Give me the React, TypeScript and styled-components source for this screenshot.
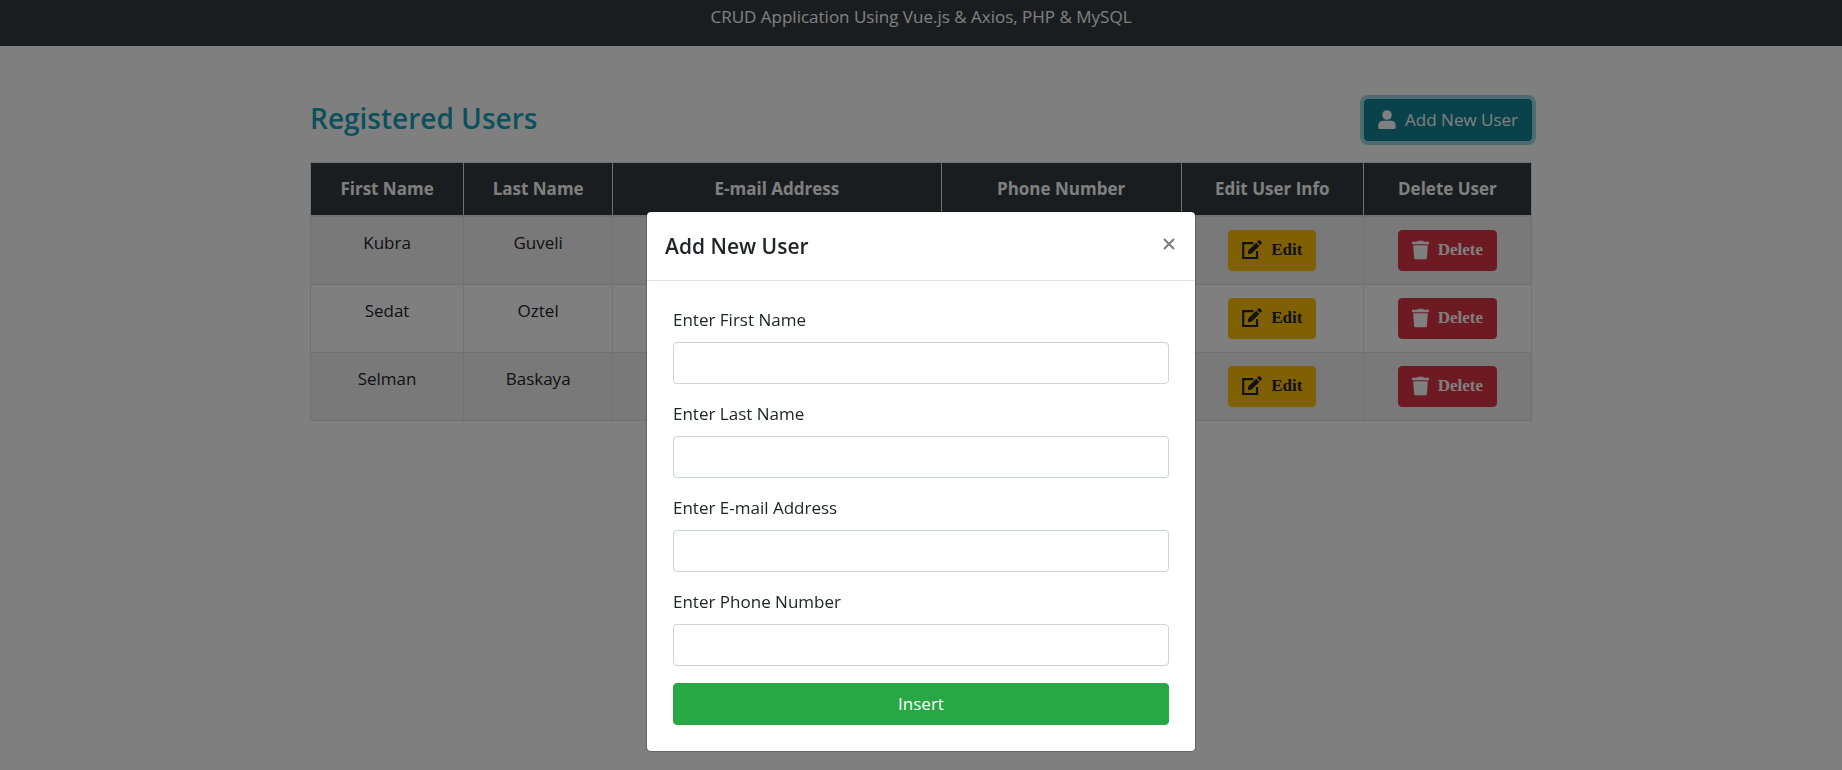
import React from "react";
import styled, { createGlobalStyle, css } from "styled-components";

const GlobalStyle = createGlobalStyle`
  *, *::before, *::after { box-sizing: border-box; }
  body {
    margin: 0;
    background: #fff;
    color: #212529;
    font-family: "Open Sans", "Segoe UI", sans-serif;
    font-size: 17px;
    line-height: 26px;
  }
  button, input { font: inherit; }
`;

const Navbar = styled.header`
  padding: 4px 16px 16px;
  background: #343a40;
  color: #fff;
  text-align: center;
`;

const Container = styled.main`
  width: calc(100% - 36px);
  max-width: 1222px;
  margin: 0 auto;
  padding-top: 53px;
`;

const TitleRow = styled.div`
  display: flex;
  justify-content: space-between;
  align-items: flex-start;
  margin-bottom: 21px;
`;

const PageTitle = styled.h3`
  margin: 0;
  color: #17a2b8;
  font-size: 28px;
  font-weight: 600;
  line-height: 38px;
`;

type Tone = "info" | "warning" | "danger" | "success";

const tones = {
  info: css`background: #138496; border-color: #117a8b; color: #fff; box-shadow: 0 0 0 4px rgba(58, 176, 195, 0.5);`,
  warning: css`background: #ffc107; border-color: #ffc107; color: #212529;`,
  danger: css`background: #dc3545; border-color: #dc3545; color: #fff;`,
  success: css`background: #28a745; border-color: #28a745; color: #fff;`,
};

const Button = styled.button<{ $tone: Tone; $block?: boolean }>`
  display: ${(p) => (p.$block ? "flex" : "inline-flex")};
  width: ${(p) => (p.$block ? "100%" : "auto")};
  height: 42px;
  align-items: center;
  justify-content: center;
  gap: 9px;
  padding: 0 13px;
  border: 1px solid;
  border-radius: 4px;
  cursor: pointer;
  ${(p) => tones[p.$tone]}
`;

const RowButton = styled(Button)`
  height: 41px;
  font-family: "Liberation Serif", "Times New Roman", serif;
  font-size: 17px;
  font-weight: 700;
  vertical-align: top;
`;

const UserTable = styled.table`
  width: 100%;
  table-layout: fixed;
  border-collapse: collapse;
  text-align: center;
`;

const HeadCell = styled.th<{ $width: string }>`
  width: ${(p) => p.$width};
  height: 53px;
  padding: 0;
  border: 1px solid #dee2e6;
  border-bottom-width: 2px;
  background: #343a40;
  color: #fff;
  font-weight: 700;
`;

const BodyRow = styled.tr`
  &:nth-child(odd) { background: rgba(0, 0, 0, 0.05); }
`;

const Cell = styled.td`
  height: 68px;
  padding: 13px;
  border: 1px solid #dee2e6;
  vertical-align: top;
`;

const Backdrop = styled.div`
  position: fixed;
  inset: 0;
  display: flex;
  align-items: flex-start;
  justify-content: center;
  padding-top: 211px;
  background: rgba(0, 0, 0, 0.5);
`;

const Dialog = styled.section`
  width: 550px;
  max-width: 100%;
  border: 1px solid rgba(0, 0, 0, 0.2);
  border-radius: 5px;
  background: #fff;
  background-clip: padding-box;
`;

const DialogHeader = styled.header`
  display: flex;
  align-items: flex-start;
  justify-content: space-between;
  padding: 18px;
  border-bottom: 1px solid #dee2e6;
`;

const DialogTitle = styled.h5`
  margin: 0;
  font-size: 21px;
  font-weight: 600;
  line-height: 32px;
`;

const CloseButton = styled.button`
  display: flex;
  padding: 8px 2px;
  border: 0;
  background: none;
  color: #808080;
  cursor: pointer;
`;

const Form = styled.form`
  display: flex;
  flex-direction: column;
  gap: 17px;
  padding: 26px;
`;

const Field = styled.div`
  display: flex;
  flex-direction: column;
  gap: 9px;
`;

const TextInput = styled.input`
  width: 100%;
  height: 42px;
  padding: 6px 13px;
  border: 1px solid #ced4da;
  border-radius: 4px;
  background: #fff;
`;

const PersonIcon = () => (
  <svg width="18" height="20" viewBox="0 0 18 20" fill="currentColor" aria-hidden="true">
    <circle cx="9" cy="5" r="4.8" />
    <path d="M.3 17v-1.500C.3 12.800 2.300 10.800 5 10.800h8c2.700 0 4.700 2 4.700 4.700V17c0 1.400-.6 2-1.800 2H2.100C.9 19 .3 18.400.3 17z" />
  </svg>
);

const EditIcon = () => (
  <svg width="20" height="20" viewBox="0 0 20 20" aria-hidden="true">
    <path d="M11.500 3.200H1.200V18H15v-7" fill="none" stroke="currentColor" strokeWidth="2.200" />
    <path d="M5.800 14.300l.6-4 7.800-7.600 3.200 3.200-7.800 7.700zM15.100 1.900l1.300-1.300q.8-.7 1.600 0l1.500 1.500q.7.8 0 1.600l-1.300 1.300z" fill="currentColor" />
  </svg>
);

const TrashIcon = () => (
  <svg width="17" height="20" viewBox="0 0 17 20" fill="currentColor" aria-hidden="true">
    <path d="M0 1.800h5L6 .7h5l1 1.100h5v2.400H0zM1.200 5.300h14.600L14.900 18q-.1 1.300-1.400 1.300h-10Q2.200 19.300 2.100 18z" />
  </svg>
);

const columns = [
  { label: "First Name", width: "12.54%" },
  { label: "Last Name", width: "12.21%" },
  { label: "E-mail Address", width: "26.89%" },
  { label: "Phone Number", width: "19.67%" },
  { label: "Edit User Info", width: "14.92%" },
  { label: "Delete User", width: "13.77%" },
];

const users = [
  { first: "Kubra", last: "Guveli" },
  { first: "Sedat", last: "Oztel" },
  { first: "Selman", last: "Baskaya" },
];

const fields = [
  { id: "first-name", label: "Enter First Name", type: "text" },
  { id: "last-name", label: "Enter Last Name", type: "text" },
  { id: "email", label: "Enter E-mail Address", type: "email" },
  { id: "phone", label: "Enter Phone Number", type: "tel" },
];

export default function App() {
  return (
    <>
      <GlobalStyle />
      <Navbar>CRUD Application Using Vue.js &amp; Axios, PHP &amp; MySQL</Navbar>
      <Container>
        <TitleRow>
          <PageTitle>Registered Users</PageTitle>
          <Button type="button" $tone="info"><PersonIcon />Add New User</Button>
        </TitleRow>
        <UserTable>
          <thead>
            <tr>
              {columns.map((c) => <HeadCell key={c.label} $width={c.width}>{c.label}</HeadCell>)}
            </tr>
          </thead>
          <tbody>
            {users.map((u) => (
              <BodyRow key={u.first}>
                <Cell>{u.first}</Cell>
                <Cell>{u.last}</Cell>
                <Cell />
                <Cell />
                <Cell><RowButton type="button" $tone="warning"><EditIcon />Edit</RowButton></Cell>
                <Cell><RowButton type="button" $tone="danger"><TrashIcon />Delete</RowButton></Cell>
              </BodyRow>
            ))}
          </tbody>
        </UserTable>
      </Container>
      <Backdrop>
        <Dialog role="dialog" aria-modal="true" aria-labelledby="dialog-title">
          <DialogHeader>
            <DialogTitle id="dialog-title">Add New User</DialogTitle>
            <CloseButton type="button" aria-label="Close">
              <svg width="12" height="12" viewBox="0 0 12 12" stroke="currentColor" strokeWidth="2.200" aria-hidden="true">
                <path d="M1 1l10 10M11 1L1 11" />
              </svg>
            </CloseButton>
          </DialogHeader>
          <Form>
            {fields.map((f) => (
              <Field key={f.id}>
                <label htmlFor={f.id}>{f.label}</label>
                <TextInput id={f.id} type={f.type} />
              </Field>
            ))}
            <Button type="submit" $tone="success" $block>Insert</Button>
          </Form>
        </Dialog>
      </Backdrop>
    </>
  );
}
